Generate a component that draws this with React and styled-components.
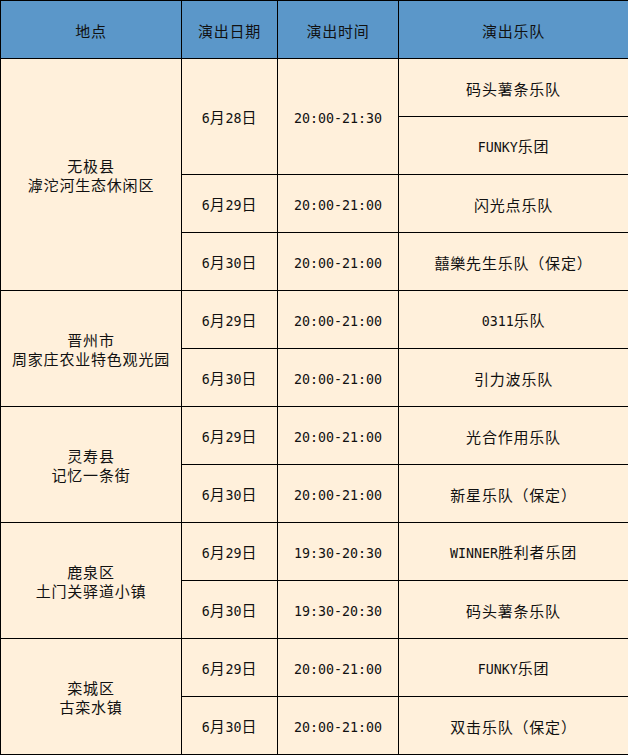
import React from "react";
import styled, { createGlobalStyle } from "styled-components";

const Global = createGlobalStyle`
  html, body { margin: 0; padding: 0; overflow: hidden; background: #fff0db; }
  body { font-family: "Noto Sans CJK SC", "Noto Sans", sans-serif; }
`;

const Grid = styled.div`
  display: grid;
  width: 629px;
  box-sizing: border-box;
  grid-template-columns: 180px 95px 120px 229px;
  grid-auto-rows: 57px;
  gap: 1px;
  padding: 1px;
  background: #000;
`;

const Cell = styled.div`
  grid-row: span ${(p) => p.$span || 1};
  background: ${(p) => (p.$head ? "#5b97c9" : "#fff0db")};
  display: flex;
  flex-direction: column;
  align-items: center;
  justify-content: center;
  text-align: center;
  color: #111;
  font-size: 15px;
  line-height: 19px;
  letter-spacing: 0.8px;
  padding-top: 1px;
`;

const Line = styled.div`
  white-space: nowrap;
`;

const Latin = styled.span`
  font-family: "DejaVu Sans Mono", monospace;
  font-size: 13.3px;
  letter-spacing: 0;
`;

function Txt({ children }) {
  const parts = String(children).split(/([\x20-\x7e]+)/).filter(Boolean);
  return parts.map((p, i) =>
    /^[\x20-\x7e]+$/.test(p) ? <Latin key={i}>{p}</Latin> : <React.Fragment key={i}>{p}</React.Fragment>
  );
}

const groups = [
  {
    loc: ["无极县", "滹沱河生态休闲区"],
    dates: [
      { d: "6月28日", t: "20:00-21:30", bands: ["码头薯条乐队", "FUNKY乐团"] },
      { d: "6月29日", t: "20:00-21:00", bands: ["闪光点乐队"] },
      { d: "6月30日", t: "20:00-21:00", bands: ["囍樂先生乐队（保定）"] },
    ],
  },
  {
    loc: ["晋州市", "周家庄农业特色观光园"],
    dates: [
      { d: "6月29日", t: "20:00-21:00", bands: ["0311乐队"] },
      { d: "6月30日", t: "20:00-21:00", bands: ["引力波乐队"] },
    ],
  },
  {
    loc: ["灵寿县", "记忆一条街"],
    dates: [
      { d: "6月29日", t: "20:00-21:00", bands: ["光合作用乐队"] },
      { d: "6月30日", t: "20:00-21:00", bands: ["新星乐队（保定）"] },
    ],
  },
  {
    loc: ["鹿泉区", "土门关驿道小镇"],
    dates: [
      { d: "6月29日", t: "19:30-20:30", bands: ["WINNER胜利者乐团"] },
      { d: "6月30日", t: "19:30-20:30", bands: ["码头薯条乐队"] },
    ],
  },
  {
    loc: ["栾城区", "古栾水镇"],
    dates: [
      { d: "6月29日", t: "20:00-21:00", bands: ["FUNKY乐团"] },
      { d: "6月30日", t: "20:00-21:00", bands: ["双击乐队（保定）"] },
    ],
  },
];

export default function App() {
  const cells = [];
  ["地点", "演出日期", "演出时间", "演出乐队"].forEach((h) =>
    cells.push(
      <Cell $head key={"h" + h}>
        <Line>{h}</Line>
      </Cell>
    )
  );
  groups.forEach((g, gi) => {
    const total = g.dates.reduce((n, d) => n + d.bands.length, 0);
    g.dates.forEach((d, di) => {
      d.bands.forEach((b, bi) => {
        if (di === 0 && bi === 0) {
          cells.push(
            <Cell $span={total} key={`l${gi}`}>
              {g.loc.map((l) => (
                <Line key={l}>{l}</Line>
              ))}
            </Cell>
          );
        }
        if (bi === 0) {
          cells.push(
            <Cell $span={d.bands.length} key={`d${gi}${di}`}>
              <Line><Txt>{d.d}</Txt></Line>
            </Cell>
          );
          cells.push(
            <Cell $span={d.bands.length} key={`t${gi}${di}`}>
              <Line><Txt>{d.t}</Txt></Line>
            </Cell>
          );
        }
        cells.push(
          <Cell key={`b${gi}${di}${bi}`}>
            <Line><Txt>{b}</Txt></Line>
          </Cell>
        );
      });
    });
  });
  return (
    <>
      <Global />
      <Grid>{cells}</Grid>
    </>
  );
}
